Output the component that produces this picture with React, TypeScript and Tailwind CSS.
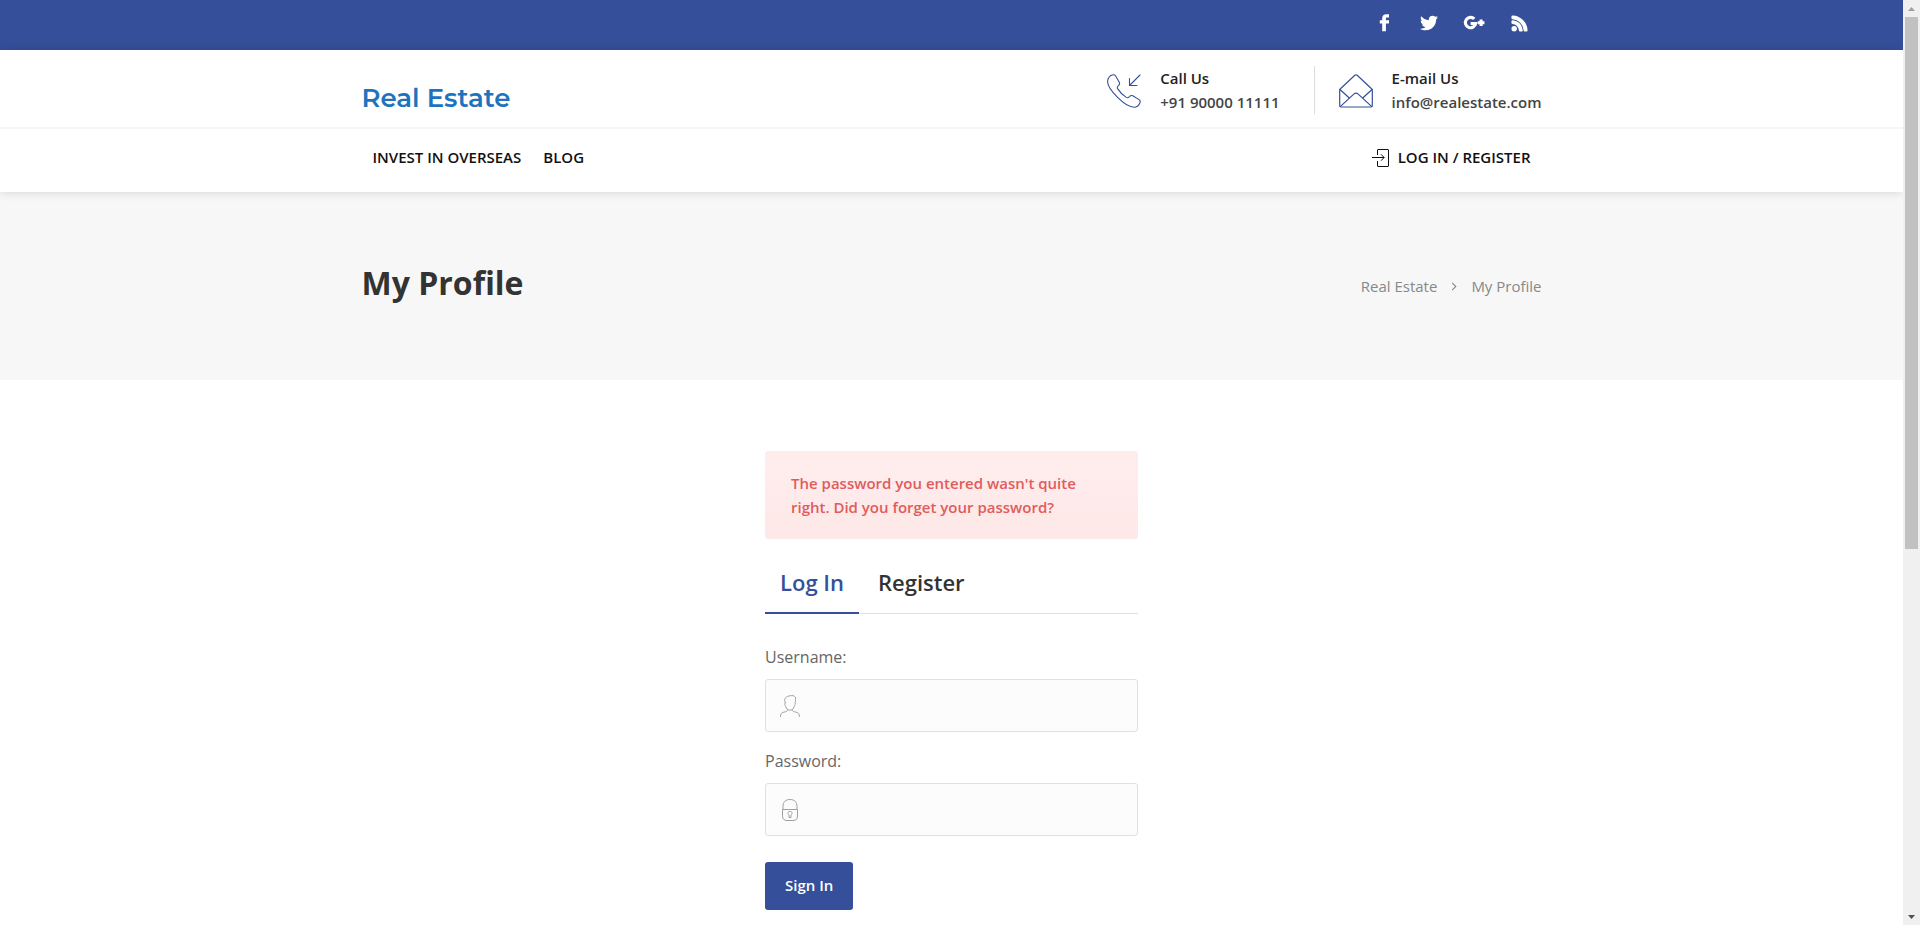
import React from "react";
import { FaRss, FaTwitter } from "react-icons/fa";

function FacebookIcon() {
  return (
    <svg viewBox="0 0 18 18" className="h-[18px] w-[18px]" fill="currentColor" aria-hidden="true">
      <path d="M14 .3v3.200h-2c-.8 0-1.100.4-1.100 1.100v1.600H14v3.300h-3.100v7.700H7.200V9.500H4.800V6.200h2.400V4.200C7.200 1.700 8.900.300 11.200.300z" />
    </svg>
  );
}

function GooglePlusIcon() {
  return (
    <svg viewBox="0 0 22 18" className="h-[18px] w-[22px]" fill="none" stroke="currentColor" strokeWidth="3.100" aria-hidden="true">
      <path d="M11.300 4.900A5.200 5.200 0 1 0 12.700 9.500H7.600" />
      <path d="M14.700 8.800h6.800M18.100 5.500v6.600" />
    </svg>
  );
}

function RssIcon() {
  return <FaRss size={17} stroke="currentColor" strokeWidth={36} />;
}

function PhoneIcon() {
  return (
    <svg viewBox="0 0 34 34" className="mt-0.5 h-[34px] w-[34px] text-[#354f9a]" fill="none" stroke="currentColor" strokeWidth="1.100" strokeLinejoin="round" strokeLinecap="round" aria-hidden="true">
      <path d="M1.200 4.800C2.300 2.500 4.600.8 6.700.8c.8 0 1.400.4 1.900 1.200l3.700 6.200c.7 1.300.2 2.400-.9 3.400-1.500 1.300-1.500 1.700-.8 3 2.300 3.700 5 6.500 8.700 8.800 1.300.8 1.900.7 3.200-.8.9-1.100 2-1.500 3.300-.8l6.200 3.800c1.400.9 1.500 2.200.8 3.600-1.100 2.200-2.800 4-5.500 4-4.400 0-11.300-4.300-16.700-9.800C5.200 18 .7 11.200.6 7.700c0-1 .2-2 .6-2.900z" />
      <path d="M33 1 22.500 11.500M22.500 4.500v7H30" />
    </svg>
  );
}

function EnvelopeIcon() {
  return (
    <svg viewBox="0 0 34 34" className="mt-0.5 h-[34px] w-[34px] text-[#354f9a]" fill="none" stroke="currentColor" strokeWidth="1.200" strokeLinejoin="round" aria-hidden="true">
      <path d="M.7 15.500v16.300c0 .8.4 1.200 1.200 1.200h30.200c.8 0 1.200-.4 1.200-1.200V15.500L18.200 1.300c-.8-.7-1.600-.7-2.400 0z" />
      <path d="m1 15.500 9.800 9M33 15.500l-9.800 9M1.200 32.600l13.600-12.500c1.400-1.200 3-1.200 4.400 0l13.600 12.500" />
    </svg>
  );
}

function LoginIcon() {
  return (
    <svg viewBox="0 0 18 18" className="mt-0.5 h-[18px] w-[18px]" fill="none" stroke="currentColor" aria-hidden="true">
      <path d="M5.500 6V1c0-.3.200-.5.500-.5h10c.3 0 .5.200.5.500v16c0 .3-.2.500-.5.500H6c-.3 0-.5-.2-.5-.5v-5" />
      <path d="M0 8.500h12M9 5.300l3.200 3.200L9 11.700" />
    </svg>
  );
}

function UserIcon() {
  return (
    <svg viewBox="0 0 20 22" className="h-[22px] w-5" fill="none" stroke="currentColor" strokeLinecap="round" strokeLinejoin="round" aria-hidden="true">
      <path d="M5.300 7.800C4 6 4.300 2.500 7.500 1.500c1.800-.8 4-1.100 5.600-.8 1.900.4 2.900 1.800 2.400 3.700-.2 1 .3 1.700-.4 3.400.6 1.600-.1 2.100-.6 2.700-.7 2-1.200 3.700-3 4.400-1.200.3-2.300.3-3.200 0-1.700-.7-2.400-2.500-3-4.400-.6-.8-1-1.400 0-2.700z" />
      <path d="M7.700 14.800c-.1 1.800-2 1.900-3.700 2.300C1.500 17.700.5 18.500.5 21.500M12.200 14.800c.1 1.800 2 1.900 3.700 2.300 2.500.6 3.500 1.400 3.500 4.400" />
    </svg>
  );
}

function LockIcon() {
  return (
    <svg viewBox="0 0 20 22" className="h-[22px] w-5" fill="none" stroke="currentColor" aria-hidden="true">
      <path d="M2.500 10.500h15V17c0 3-1.500 4.500-4.500 4.500H7c-3 0-4.500-1.500-4.500-4.500z" />
      <path d="M3 10.500V7.500C3 3 5.500.500 10 .500s7 2.500 7 7v3" />
      <path d="M9 18.500v-2.700c-2-1.200-1.300-3.300 1-3.300s3 2.100 1 3.300v2.700z" />
    </svg>
  );
}

function Contact({ icon, title, value }: { icon: React.ReactNode; title: string; value: React.ReactNode }) {
  return (
    <div className="flex items-center gap-[19px]">
      {icon}
      <div className="text-[15px] leading-6 font-semibold">
        <div className="text-[#222]">{title}</div>
        <div className="text-[#444]">{value}</div>
      </div>
    </div>
  );
}

function Field({ id, label, type, icon }: { id: string; label: string; type: string; icon: React.ReactNode }) {
  return (
    <div className="mb-[15px]">
      <label htmlFor={id} className="mb-2 block text-base leading-7 text-[#666]">
        {label}
      </label>
      <div className="flex h-[53px] items-center rounded-[3px] border border-[#e0e0e0] bg-[#fcfcfc] pl-[14px] text-[#a0a0a0]">
        {icon}
        <input id={id} type={type} className="h-full min-w-0 flex-1 bg-transparent px-3 text-[#777] outline-none" />
      </div>
    </div>
  );
}

const container = "mx-auto w-full max-w-[1180px]";

export default function App() {
  return (
    <div className="flex h-screen overflow-hidden bg-white font-['Open_Sans',sans-serif]">
      <div className="min-w-0 flex-1 overflow-hidden">
        <div className="h-[50px] bg-[#354f9a] text-white">
          <div className={`${container} flex justify-end pt-[14px]`}>
            <nav aria-label="Social" className="flex">
              <a href="#facebook" aria-label="Facebook" className="flex h-[18px] w-[45px] items-center justify-center"><FacebookIcon /></a>
              <a href="#twitter" aria-label="Twitter" className="flex h-[18px] w-[45px] items-center justify-center"><FaTwitter size={18} /></a>
              <a href="#google" aria-label="Google Plus" className="flex h-[18px] w-[45px] items-center justify-center"><GooglePlusIcon /></a>
              <a href="#rss" aria-label="RSS" className="flex h-[18px] w-[45px] items-center justify-center"><RssIcon /></a>
            </nav>
          </div>
        </div>

        <header className="relative bg-white shadow-[0_0_10px_rgba(0,0,0,0.15)]">
          <div className="border-b-2 border-[#f6f6f6]">
            <div className={`${container} flex h-[77px] justify-between`}>
              <a href="#home" className="pt-[30px] font-[Montserrat,Inter,sans-serif] text-[26px] leading-9 font-semibold text-[#1e73be]">
                Real Estate
              </a>
              <div className="mt-4 flex h-12 self-start">
                <div className="mr-6 flex items-center border-r border-[#ddd] pr-[34px]">
                  <Contact icon={<PhoneIcon />} title="Call Us" value="+91 90000 11111" />
                </div>
                <Contact
                  icon={<EnvelopeIcon />}
                  title="E-mail Us"
                  value={<a href="mailto:info@realestate.com">info@realestate.com</a>}
                />
              </div>
            </div>
          </div>
          <div className={`${container} flex h-[63px] items-start justify-between px-[11px] pt-4 text-[15px] leading-6 font-semibold text-[#111]`}>
            <nav aria-label="Main" className="flex gap-[22px]">
              <a href="#invest">INVEST IN OVERSEAS</a>
              <a href="#blog">BLOG</a>
            </nav>
            <a href="#login" className="flex items-center gap-2">
              <LoginIcon />
              LOG IN / REGISTER
            </a>
          </div>
        </header>

        <section className="bg-[#f7f7f7]">
          <div className={`${container} flex h-[188px] items-center justify-between`}>
            <h1 className="pb-1.5 text-[32px] leading-10 font-bold text-[#333]">My Profile</h1>
            <nav aria-label="Breadcrumb" className="flex items-center gap-[14px] text-[15px] leading-6 text-[#888]">
              <a href="#home">Real Estate</a>
              <svg viewBox="0 0 6 10" className="h-[9px] w-[6px]" fill="none" stroke="currentColor" strokeWidth="1.200" aria-hidden="true">
                <path d="m1 1 4 4-4 4" />
              </svg>
              <span>My Profile</span>
            </nav>
          </div>
        </section>

        <main className="mx-auto w-[373px] pt-[71px]">
          <div role="alert" className="mb-[29px] rounded-[3px] bg-gradient-to-b from-[#ffeded] to-[#fee8e8] px-[26px] py-5 text-[15px] leading-6 font-semibold text-[#e05c5c]">
            The password you entered wasn't quite right. Did you forget your password?
          </div>

          <div role="tablist" className="mb-[29px] flex gap-1 border-b border-[#e0e0e0] text-[22px] leading-7 font-semibold">
            <button role="tab" aria-selected="true" className="-mb-px border-b-2 border-[#354f9a] px-[15px] pb-4 text-[#354f9a]">Log In</button>
            <button role="tab" aria-selected="false" className="-mb-px border-b-2 border-transparent px-[15px] pb-4 text-[#333]">Register</button>
          </div>

          <form onSubmit={(event) => event.preventDefault()}>
            <Field id="username" label="Username:" type="text" icon={<UserIcon />} />
            <Field id="password" label="Password:" type="password" icon={<LockIcon />} />
            <button type="submit" className="mt-[11px] h-12 rounded-[3px] bg-[#354f9a] px-5 pb-0.5 text-[15px] font-semibold text-white">
              Sign In
            </button>
          </form>
        </main>
      </div>

      <div aria-hidden="true" className="flex w-[17px] flex-none flex-col items-center bg-[#f0f0f0]">
        <svg viewBox="0 0 17 17" className="h-[17px] w-[17px] flex-none" fill="#a0a0a0"><path d="M5 11l3.500-4 3.500 4z" /></svg>
        <div className="h-[57.5%] w-[13px] flex-none bg-[#c1c1c1]" />
        <div className="flex-1" />
        <svg viewBox="0 0 17 17" className="h-[17px] w-[17px] flex-none" fill="#505050"><path d="M5 7l3.500 4L12 7z" /></svg>
      </div>
    </div>
  );
}
